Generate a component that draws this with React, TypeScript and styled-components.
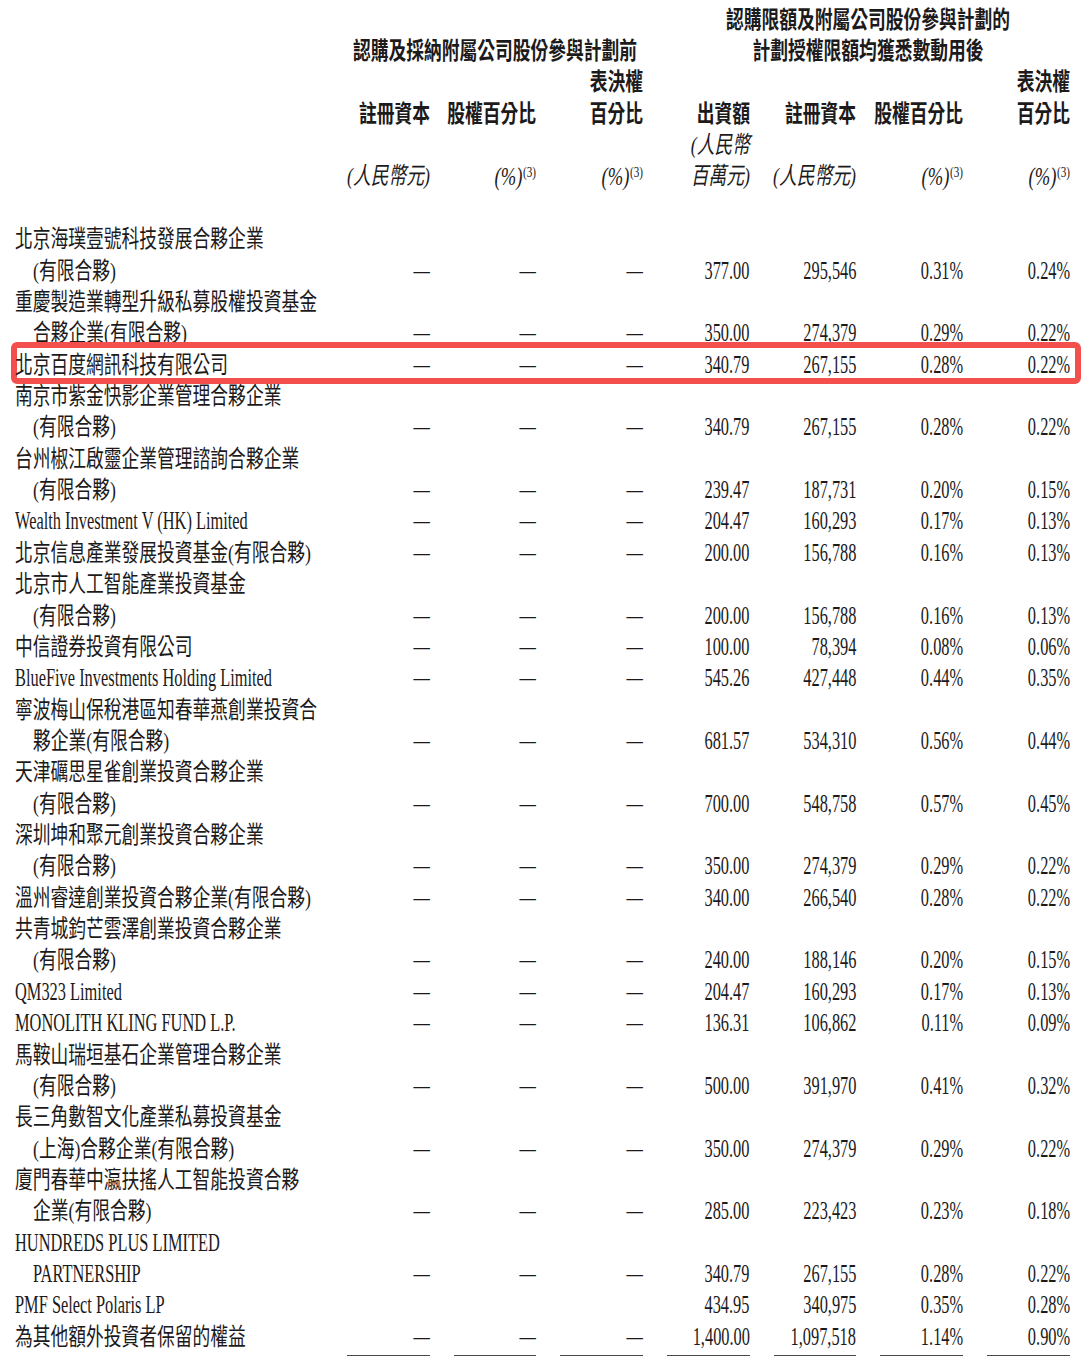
import styled, { createGlobalStyle, css } from 'styled-components';

const LINE = 31.37;
const COLS = '308px repeat(7, 106.7px)';
const CJK_SX = 0.74;
const NUM_SX = 0.63;

const GlobalStyle = createGlobalStyle`
  html, body {
    margin: 0;
    padding: 0;
    background: #fff;
  }
  body {
    font-family: 'Liberation Serif', 'Noto Sans CJK TC', serif;
    color: #1c1a1b;
  }
`;

type Val = string | null;
type Entry = { name: string[]; vals: Val[]; mark?: boolean };

const D = '—';
const P = [D, D, D];

const ROWS: Entry[] = [
  { name: ['北京海璞壹號科技發展合夥企業', '(有限合夥)'], vals: [...P, '377.00', '295,546', '0.31%', '0.24%'] },
  { name: ['重慶製造業轉型升級私募股權投資基金', '合夥企業(有限合夥)'], vals: [...P, '350.00', '274,379', '0.29%', '0.22%'] },
  { name: ['北京百度網訊科技有限公司'], vals: [...P, '340.79', '267,155', '0.28%', '0.22%'], mark: true },
  { name: ['南京市紫金快影企業管理合夥企業', '(有限合夥)'], vals: [...P, '340.79', '267,155', '0.28%', '0.22%'] },
  { name: ['台州椒江啟靈企業管理諮詢合夥企業', '(有限合夥)'], vals: [...P, '239.47', '187,731', '0.20%', '0.15%'] },
  { name: ['Wealth Investment V (HK) Limited'], vals: [...P, '204.47', '160,293', '0.17%', '0.13%'] },
  { name: ['北京信息產業發展投資基金(有限合夥)'], vals: [...P, '200.00', '156,788', '0.16%', '0.13%'] },
  { name: ['北京市人工智能產業投資基金', '(有限合夥)'], vals: [...P, '200.00', '156,788', '0.16%', '0.13%'] },
  { name: ['中信證券投資有限公司'], vals: [...P, '100.00', '78,394', '0.08%', '0.06%'] },
  { name: ['BlueFive Investments Holding Limited'], vals: [...P, '545.26', '427,448', '0.44%', '0.35%'] },
  { name: ['寧波梅山保稅港區知春華燕創業投資合', '夥企業(有限合夥)'], vals: [...P, '681.57', '534,310', '0.56%', '0.44%'] },
  { name: ['天津礪思星雀創業投資合夥企業', '(有限合夥)'], vals: [...P, '700.00', '548,758', '0.57%', '0.45%'] },
  { name: ['深圳坤和聚元創業投資合夥企業', '(有限合夥)'], vals: [...P, '350.00', '274,379', '0.29%', '0.22%'] },
  { name: ['溫州睿達創業投資合夥企業(有限合夥)'], vals: [...P, '340.00', '266,540', '0.28%', '0.22%'] },
  { name: ['共青城鈞芒雲澤創業投資合夥企業', '(有限合夥)'], vals: [...P, '240.00', '188,146', '0.20%', '0.15%'] },
  { name: ['QM323 Limited'], vals: [...P, '204.47', '160,293', '0.17%', '0.13%'] },
  { name: ['MONOLITH KLING FUND L.P.'], vals: [...P, '136.31', '106,862', '0.11%', '0.09%'] },
  { name: ['馬鞍山瑞垣基石企業管理合夥企業', '(有限合夥)'], vals: [...P, '500.00', '391,970', '0.41%', '0.32%'] },
  { name: ['長三角數智文化產業私募投資基金', '(上海)合夥企業(有限合夥)'], vals: [...P, '350.00', '274,379', '0.29%', '0.22%'] },
  { name: ['廈門春華中瀛扶搖人工智能投資合夥', '企業(有限合夥)'], vals: [...P, '285.00', '223,423', '0.23%', '0.18%'] },
  { name: ['HUNDREDS PLUS LIMITED', 'PARTNERSHIP'], vals: [...P, '340.79', '267,155', '0.28%', '0.22%'] },
  { name: ['PMF Select Polaris LP'], vals: [null, null, null, '434.95', '340,975', '0.35%', '0.28%'] },
  { name: ['為其他額外投資者保留的權益'], vals: [...P, '1,400.00', '1,097,518', '1.14%', '0.90%'] },
];

// '%' stands for the "(%)(3)" unit
const HEAD_COLS: { label: string[]; unit: string[] }[] = [
  { label: ['註冊資本'], unit: ['(人民幣元)'] },
  { label: ['股權百分比'], unit: ['%'] },
  { label: ['表決權', '百分比'], unit: ['%'] },
  { label: ['出資額'], unit: ['(人民幣', '百萬元)'] },
  { label: ['註冊資本'], unit: ['(人民幣元)'] },
  { label: ['股權百分比'], unit: ['%'] },
  { label: ['表決權', '百分比'], unit: ['%'] },
];

const hasCjk = (s: string) => /[\u3400-\u9fff]/.test(s);

const App = () => (
  <>
    <GlobalStyle />
    <Page>
      <Head>
        <GroupTitle $col="2 / 5" $row="2 / 3">
          <Line $align="center">
            <Squeeze $sx={CJK_SX} $origin="center" $bold>
              認購及採納附屬公司股份參與計劃前
            </Squeeze>
          </Line>
        </GroupTitle>
        <GroupTitle $col="5 / 9" $row="1 / 3">
          <Line $align="center">
            <Squeeze $sx={CJK_SX} $origin="center" $bold>
              認購限額及附屬公司股份參與計劃的
            </Squeeze>
          </Line>
          <Line $align="center">
            <Squeeze $sx={CJK_SX} $origin="center" $bold>
              計劃授權限額均獲悉數動用後
            </Squeeze>
          </Line>
        </GroupTitle>
        {HEAD_COLS.map((c, i) => (
          <ColStack key={`l${i}`} $col={i + 2} $row="1 / 5">
            {c.label.map((t) => (
              <Line key={t} $align="flex-end">
                <Squeeze $sx={CJK_SX} $origin="right" $bold>
                  {t}
                </Squeeze>
              </Line>
            ))}
          </ColStack>
        ))}
        {HEAD_COLS.map((c, i) => (
          <ColStack key={`u${i}`} $col={i + 2} $row="5 / 7">
            {c.unit.map((t) => (
              <Line key={t} $align="flex-end">
                {t === '%' ? (
                  <Squeeze $sx={0.74} $origin="right" $size={25}>
                    <Italic>(%)</Italic>
                    <Sup>(3)</Sup>
                  </Squeeze>
                ) : (
                  <Squeeze $sx={CJK_SX} $origin="right">
                    <Italic>{t}</Italic>
                  </Squeeze>
                )}
              </Line>
            ))}
          </ColStack>
        ))}
      </Head>

      {ROWS.map((r) => (
        <Row key={r.name.join('')} $mark={r.mark}>
          <NameCell>
            {r.name.map((l, i) => (
              <NameLine key={l} $indent={i > 0}>
                {hasCjk(l) ? (
                  <Squeeze $sx={CJK_SX} $origin="left">
                    {l}
                  </Squeeze>
                ) : (
                  <Squeeze $sx={NUM_SX} $origin="left" $size={26}>
                    {l}
                  </Squeeze>
                )}
              </NameLine>
            ))}
          </NameCell>
          {r.vals.map((v, i) => (
            <Cell key={i}>
              {v && (
                <Squeeze $sx={NUM_SX} $origin="right" $size={26}>
                  {v}
                </Squeeze>
              )}
            </Cell>
          ))}
        </Row>
      ))}

      <Rules>
        {HEAD_COLS.map((_, i) => (
          <Rule key={i} $col={i + 2} />
        ))}
      </Rules>
    </Page>
  </>
);

export default App;

const Page = styled.div`
  width: 1084px;
  box-sizing: border-box;
  padding: 4px 14px 12px 15px;
  font-size: 24px;
`;

const Head = styled.div`
  display: grid;
  grid-template-columns: ${COLS};
  grid-template-rows: repeat(6, ${LINE}px);
  margin-bottom: ${LINE}px;
`;

const GroupTitle = styled.div<{ $col: string; $row: string }>`
  grid-column: ${(p) => p.$col};
  grid-row: ${(p) => p.$row};
  padding-left: 24px;
  display: flex;
  flex-direction: column;
`;

const ColStack = styled.div<{ $col: number; $row: string }>`
  grid-column: ${(p) => p.$col};
  grid-row: ${(p) => p.$row};
  display: flex;
  flex-direction: column;
  justify-content: flex-end;
`;

const Line = styled.div<{ $align: string }>`
  height: ${LINE}px;
  display: flex;
  align-items: center;
  justify-content: ${(p) => p.$align};
  white-space: nowrap;
`;

const Squeeze = styled.span<{ $sx: number; $origin: string; $bold?: boolean; $size?: number }>`
  display: inline-block;
  flex: none;
  white-space: nowrap;
  line-height: 1;
  font-size: ${(p) => (p.$size ? `${p.$size}px` : 'inherit')};
  font-weight: ${(p) => (p.$bold ? 700 : 400)};
  transform: scaleX(${(p) => p.$sx});
  transform-origin: ${(p) => p.$origin} center;
`;

const Italic = styled.span`
  font-style: italic;
`;

const Sup = styled.span`
  font-size: 15px;
  position: relative;
  top: -8px;
  margin-left: 1px;
`;

const Row = styled.div<{ $mark?: boolean }>`
  display: grid;
  grid-template-columns: ${COLS};
  align-items: end;

  ${(p) =>
    p.$mark &&
    css`
      position: relative;
      z-index: 1;

      &::before {
        content: '';
        position: absolute;
        z-index: -1;
        inset: -7px -11px -4px -4px;
        background: #fff;
        border: 6px solid #f24f4d;
        border-radius: 6px;
      }
    `}
`;

const NameCell = styled.div`
  display: flex;
  flex-direction: column;
`;

const NameLine = styled.div<{ $indent?: boolean }>`
  height: ${LINE}px;
  display: flex;
  align-items: center;
  padding-left: ${(p) => (p.$indent ? 18 : 0)}px;
`;

const Cell = styled.div`
  height: ${LINE}px;
  display: flex;
  align-items: center;
  justify-content: flex-end;
`;

const Rules = styled.div`
  display: grid;
  grid-template-columns: ${COLS};
  margin-top: 3px;
`;

const Rule = styled.div<{ $col: number }>`
  grid-column: ${(p) => p.$col};
  margin-left: 24px;
  border-top: 1.5px solid #4a4a4a;
`;
